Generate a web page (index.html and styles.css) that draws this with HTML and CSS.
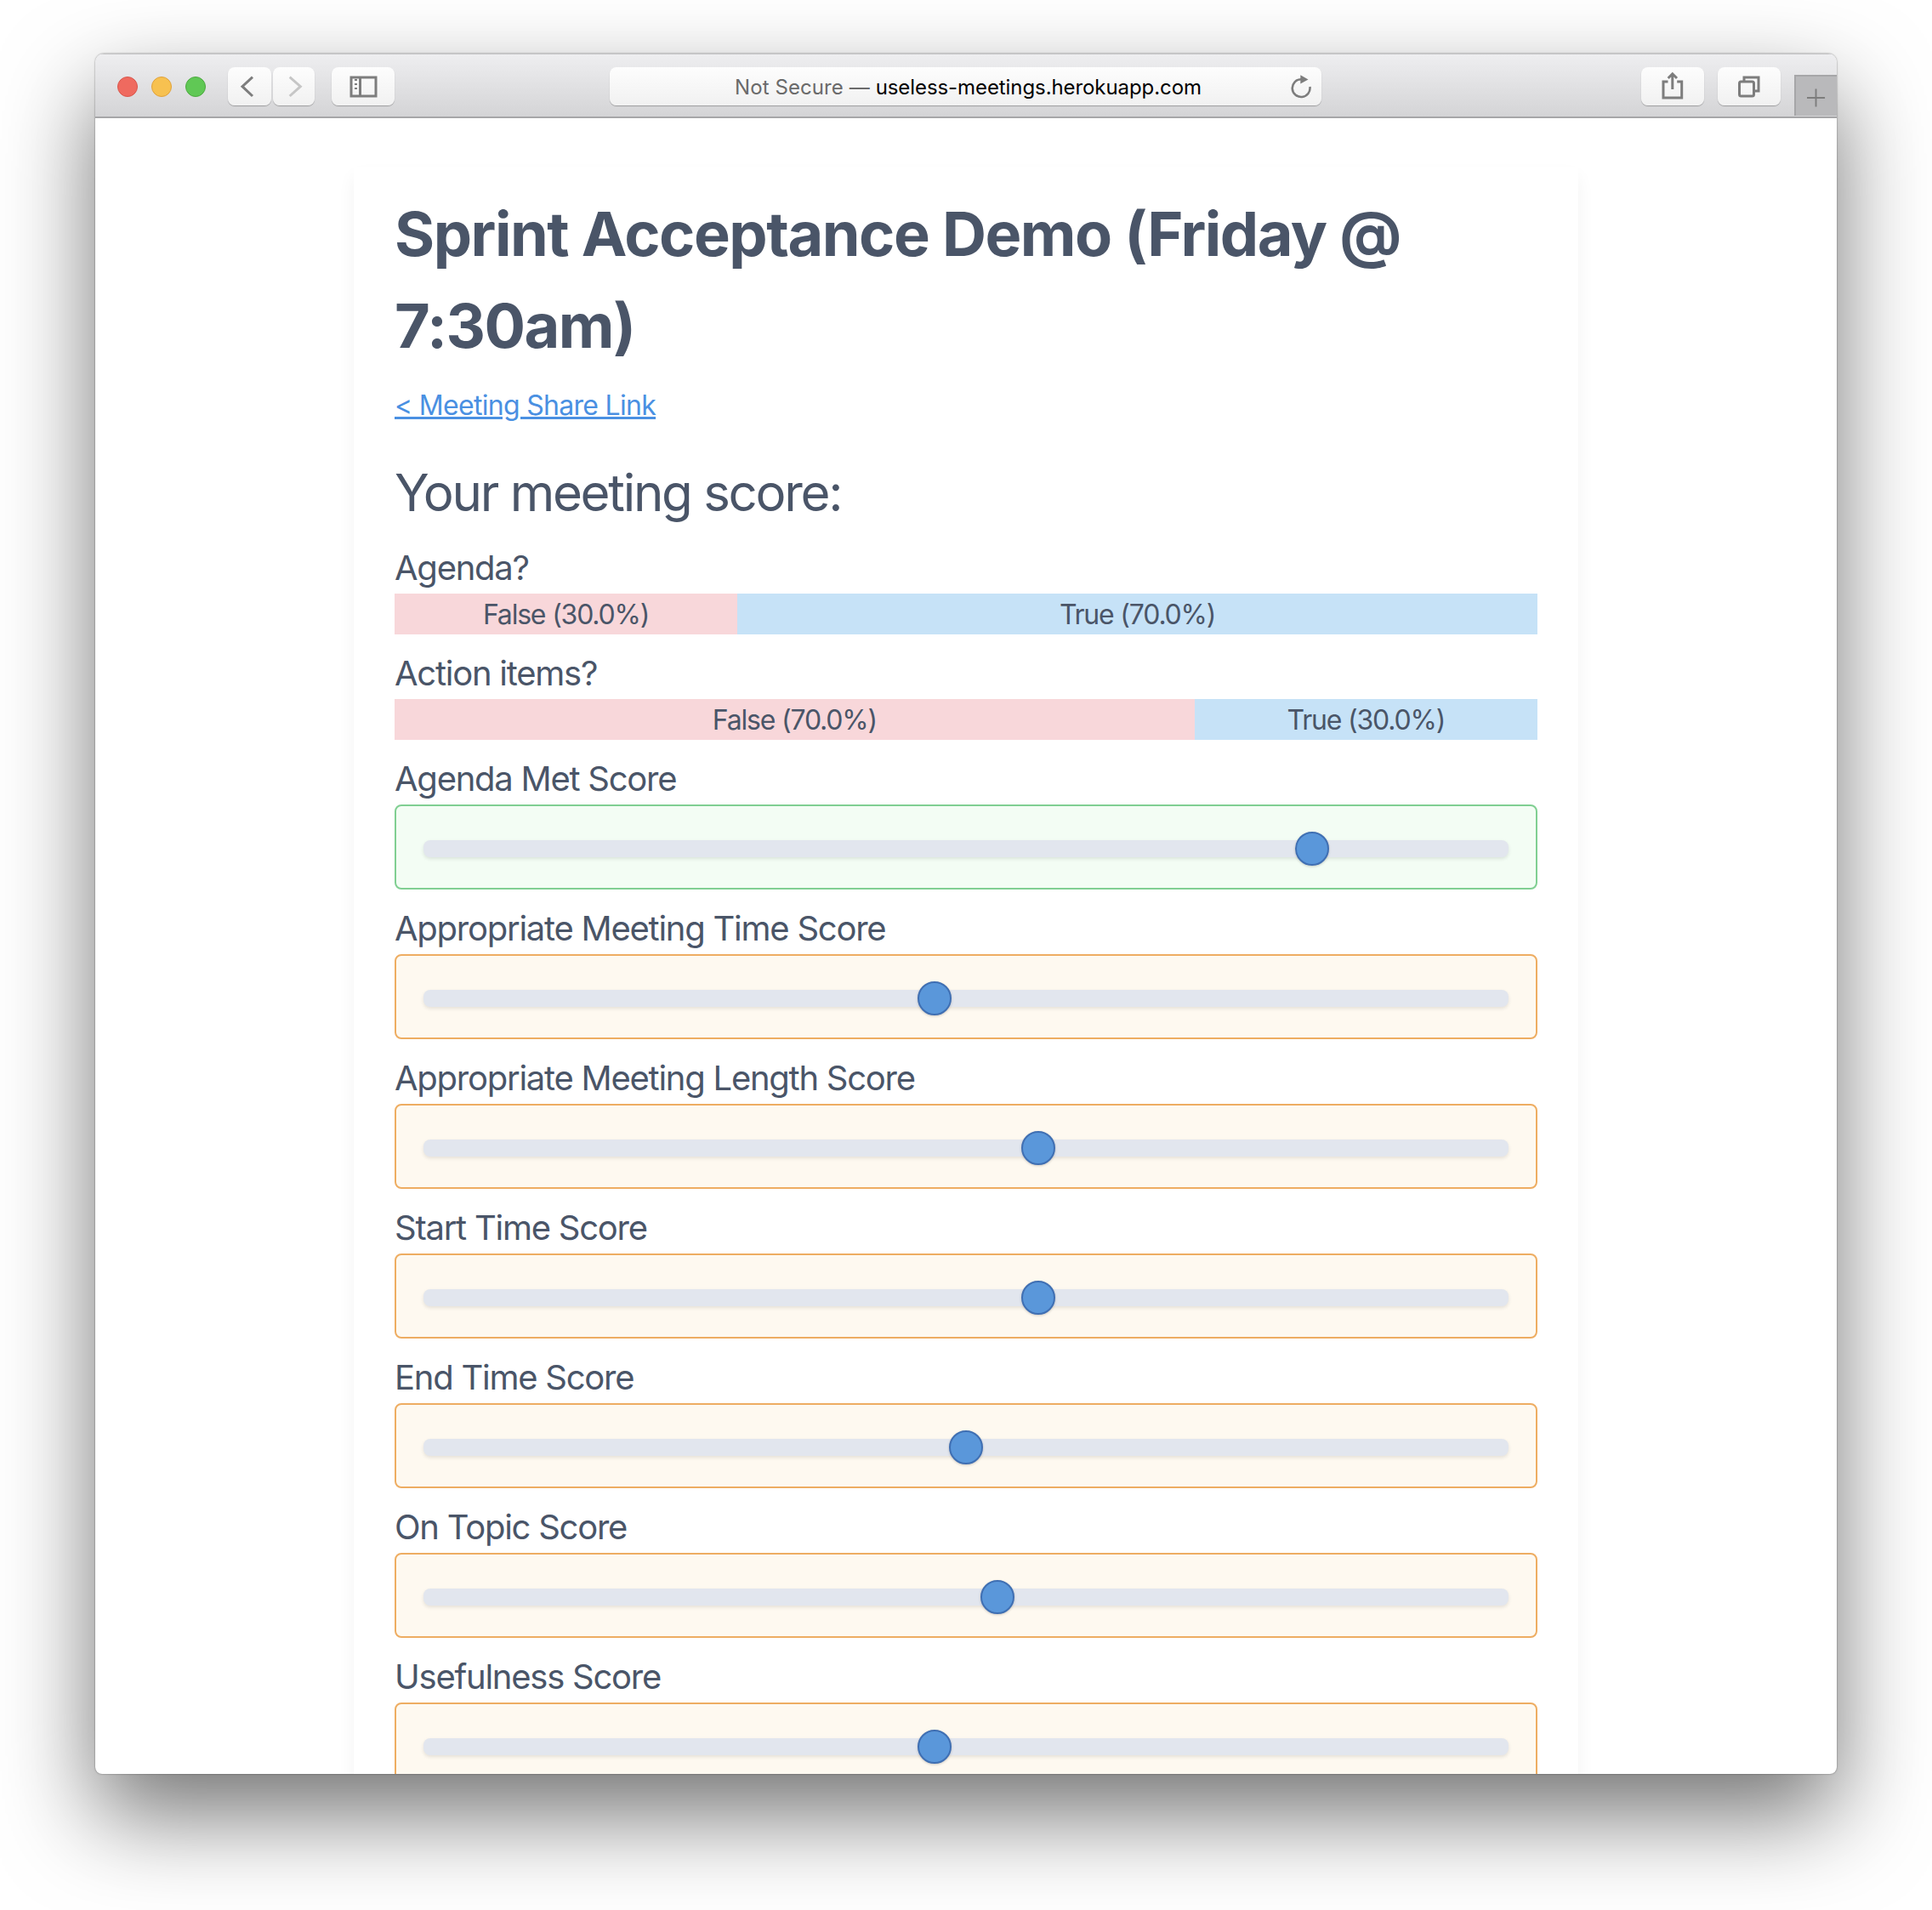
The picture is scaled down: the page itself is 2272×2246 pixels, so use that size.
FILE: index.html
```html
<!DOCTYPE html>
<html lang="en">
<head>
<meta charset="utf-8">
<title>Sprint Acceptance Demo</title>
<link rel="stylesheet" href="styles.css">
</head>
<body>
<div class="stage">
  <div class="window">
    <header class="toolbar">
      <div class="lights">
        <span class="light red"></span>
        <span class="light yellow"></span>
        <span class="light green"></span>
      </div>
      <button class="tool back" aria-label="Back">
        <svg viewBox="0 0 51 45"><path class="ico" d="M29 11.7 17 22.7 29 34"/></svg>
      </button>
      <button class="tool forward" aria-label="Forward">
        <svg viewBox="0 0 49 45"><path class="ico faint" d="M19.7 11.7 32.3 22.7 19.7 34"/></svg>
      </button>
      <button class="tool sidebar" aria-label="Sidebar">
        <svg viewBox="0 0 74 45"><rect class="ico" x="23" y="12" width="29" height="22"/><path class="ico" d="M33.5 12V34"/><path class="ico thin" d="M27 15H30M27 20H30M27 25H30"/></svg>
      </button>
      <div class="url">
        <span class="url-text"><span class="url-muted">Not Secure — </span>useless-meetings.herokuapp.com</span>
        <svg class="reload" viewBox="0 0 32 32"><path class="ico reload-arc" d="M16 7.2A10.4 10.4 0 1 0 26.4 16"/><path class="arrow" d="M15.3 2.3 24.5 7.4 15.3 12.5Z"/></svg>
      </div>
      <button class="tool share" aria-label="Share">
        <svg viewBox="0 0 74 45"><path class="ico" d="M31.5 17H26V36H47.7V17H42.2"/><path class="ico" d="M36.8 8V26M31.7 13 36.8 7.8 42 13"/></svg>
      </button>
      <button class="tool tabs" aria-label="Tabs">
        <svg viewBox="0 0 74 45"><rect class="ico" x="25.5" y="17" width="17" height="17" rx="2"/><path class="ico" d="M31 16V12H48V28H44"/></svg>
      </button>
      <div class="newtab">
        <svg viewBox="0 0 50 48"><path class="ico thin" d="M24.5 15V37M13.5 26H35.5"/></svg>
      </div>
    </header>
    <main class="content">
      <section class="card">
        <h1 class="title">Sprint Acceptance Demo (Friday @ 7:30am)</h1>
        <a class="share-link" href="#">&lt; Meeting Share Link</a>
        <h2 class="heading">Your meeting score:</h2>

        <div class="label">Agenda?</div>
        <div class="bar">
          <div class="seg seg-false" style="width:30%">False (30.0%)</div>
          <div class="seg seg-true" style="width:70%">True (70.0%)</div>
        </div>

        <div class="label">Action items?</div>
        <div class="bar">
          <div class="seg seg-false" style="width:70%">False (70.0%)</div>
          <div class="seg seg-true" style="width:30%">True (30.0%)</div>
        </div>

        <div class="label">Agenda Met Score</div>
        <div class="score good"><input class="slider" type="range" min="0" max="1000" value="829" aria-label="Agenda Met Score"></div>

        <div class="label">Appropriate Meeting Time Score</div>
        <div class="score mid"><input class="slider" type="range" min="0" max="1000" value="470" aria-label="Appropriate Meeting Time Score"></div>

        <div class="label">Appropriate Meeting Length Score</div>
        <div class="score mid"><input class="slider" type="range" min="0" max="1000" value="569" aria-label="Appropriate Meeting Length Score"></div>

        <div class="label">Start Time Score</div>
        <div class="score mid"><input class="slider" type="range" min="0" max="1000" value="569" aria-label="Start Time Score"></div>

        <div class="label">End Time Score</div>
        <div class="score mid"><input class="slider" type="range" min="0" max="1000" value="500" aria-label="End Time Score"></div>

        <div class="label">On Topic Score</div>
        <div class="score mid"><input class="slider" type="range" min="0" max="1000" value="530" aria-label="On Topic Score"></div>

        <div class="label">Usefulness Score</div>
        <div class="score mid"><input class="slider" type="range" min="0" max="1000" value="470" aria-label="Usefulness Score"></div>
      </section>
    </main>
  </div>
</div>
</body>
</html>
```
FILE: styles.css
```css
* { box-sizing: border-box; }
html, body { margin: 0; padding: 0; background: #fff; }
body { font-family: Inter, "Liberation Sans", sans-serif; color: #4a5568; }
.stage { width: 2272px; height: 2246px; padding: 63px 112px 160px; overflow: hidden; }
.window {
  width: 2048px; height: 2023px; display: flex; flex-direction: column; overflow: hidden;
  background: #fff; border-radius: 10px 10px 8px 8px;
  box-shadow: 0 48px 110px rgba(0,0,0,.55), 0 0 2px rgba(0,0,0,.5);
}
.toolbar {
  flex: none; height: 76px; display: flex; align-items: flex-start; padding-top: 15px;
  background: linear-gradient(#eeeef0, #d4d4d6); border-bottom: 2px solid #a6a6a8; border-top: 1px solid #c4c4c6;
}
.lights { display: flex; gap: 16px; margin: 11px 26px 0 26px; }
.light { width: 24px; height: 24px; border-radius: 50%; border: 1px solid; }
.red { background: #ef6a5f; border-color: #d9564c; }
.yellow { background: #f7c150; border-color: #e0a23c; }
.green { background: #60c855; border-color: #4ca93f; }
.tool, .url {
  height: 45px; padding: 0; border: 0; border-radius: 8px;
  background: linear-gradient(#fdfdfd, #f1f1f1); box-shadow: 0 1px 1px rgba(0,0,0,.28);
}
.tool svg { display: block; width: 100%; height: 100%; }
.back { width: 51px; }
.forward { width: 49px; margin-left: 2px; }
.sidebar { width: 74px; margin-left: 20px; }
.share { width: 74px; margin-left: 376px; }
.tabs { width: 74px; margin-left: 16px; }
.ico { fill: none; stroke: #7d7d7d; stroke-width: 3; }
.thin { stroke-width: 2; }
.reload-arc { stroke-width: 2.6; }
.faint { stroke: #c6c6c6; }
.arrow { fill: #7d7d7d; }
.url {
  position: relative; width: 837px; margin-left: 253px; display: flex; align-items: center; justify-content: center;
  padding: 2px 0 0 6px; font-size: 24px; letter-spacing: -.08px; color: #000;
}
.url-muted { color: #6a6a6a; letter-spacing: .08px; }
.reload { position: absolute; left: 797px; top: 7px; width: 32px; height: 32px; }
.newtab { width: 50px; height: 48px; margin: 9px 0 0 16px; background: #b9b9bb; border: solid #a6a6a8; border-width: 2px 0 0 2px; }
.newtab svg { display: block; width: 100%; height: 100%; }
.content { flex: 1; min-height: 0; overflow: hidden; }
.card {
  width: 1440px; margin: 57px auto 0; padding: 25px 48px; background: #fff;
  box-shadow: 0 12px 20px rgba(0,0,0,.05);
}
.title { margin: 0 0 16px; font-size: 72px; line-height: 108px; font-weight: 700; letter-spacing: -1.5px; }
.share-link { display: block; font-size: 32px; line-height: 48px; letter-spacing: -.7px; color: #4a90e2; text-decoration: underline; }
.heading { margin: 33px 0 14px; font-size: 60px; line-height: 90px; font-weight: 400; letter-spacing: -2.28px; }
.label { font-size: 40px; line-height: 60px; letter-spacing: -1.25px; }
.bar { display: flex; height: 48px; margin-bottom: 16px; font-size: 32px; line-height: 48px; letter-spacing: -1.2px; }
.seg { padding-top: 1px; text-align: center; }
.seg-false { background: #f8d7da; }
.seg-true { background: #c6e2f7; }
.score { height: 100px; margin-bottom: 16px; padding: 30px 32px 26px; border: 2px solid; border-radius: 8px; }
.good { background: #f3fdf4; border-color: #80cf92; }
.mid { background: #fef9f0; border-color: #eead62; }
.slider { -webkit-appearance: none; appearance: none; display: block; width: 100%; height: 40px; margin: 0; background: transparent; }
.slider::-webkit-slider-runnable-track { height: 20px; border-radius: 8px; background: #e2e6ee; box-shadow: 0 2px 4px rgba(0,0,0,.1); }
.slider::-webkit-slider-thumb {
  -webkit-appearance: none; appearance: none; width: 40px; height: 40px; margin-top: -10px; border-radius: 50%;
  background: #5a97da; border: 2px solid #3f6fb3; box-shadow: 0 1px 3px rgba(0,0,0,.2);
}
```
